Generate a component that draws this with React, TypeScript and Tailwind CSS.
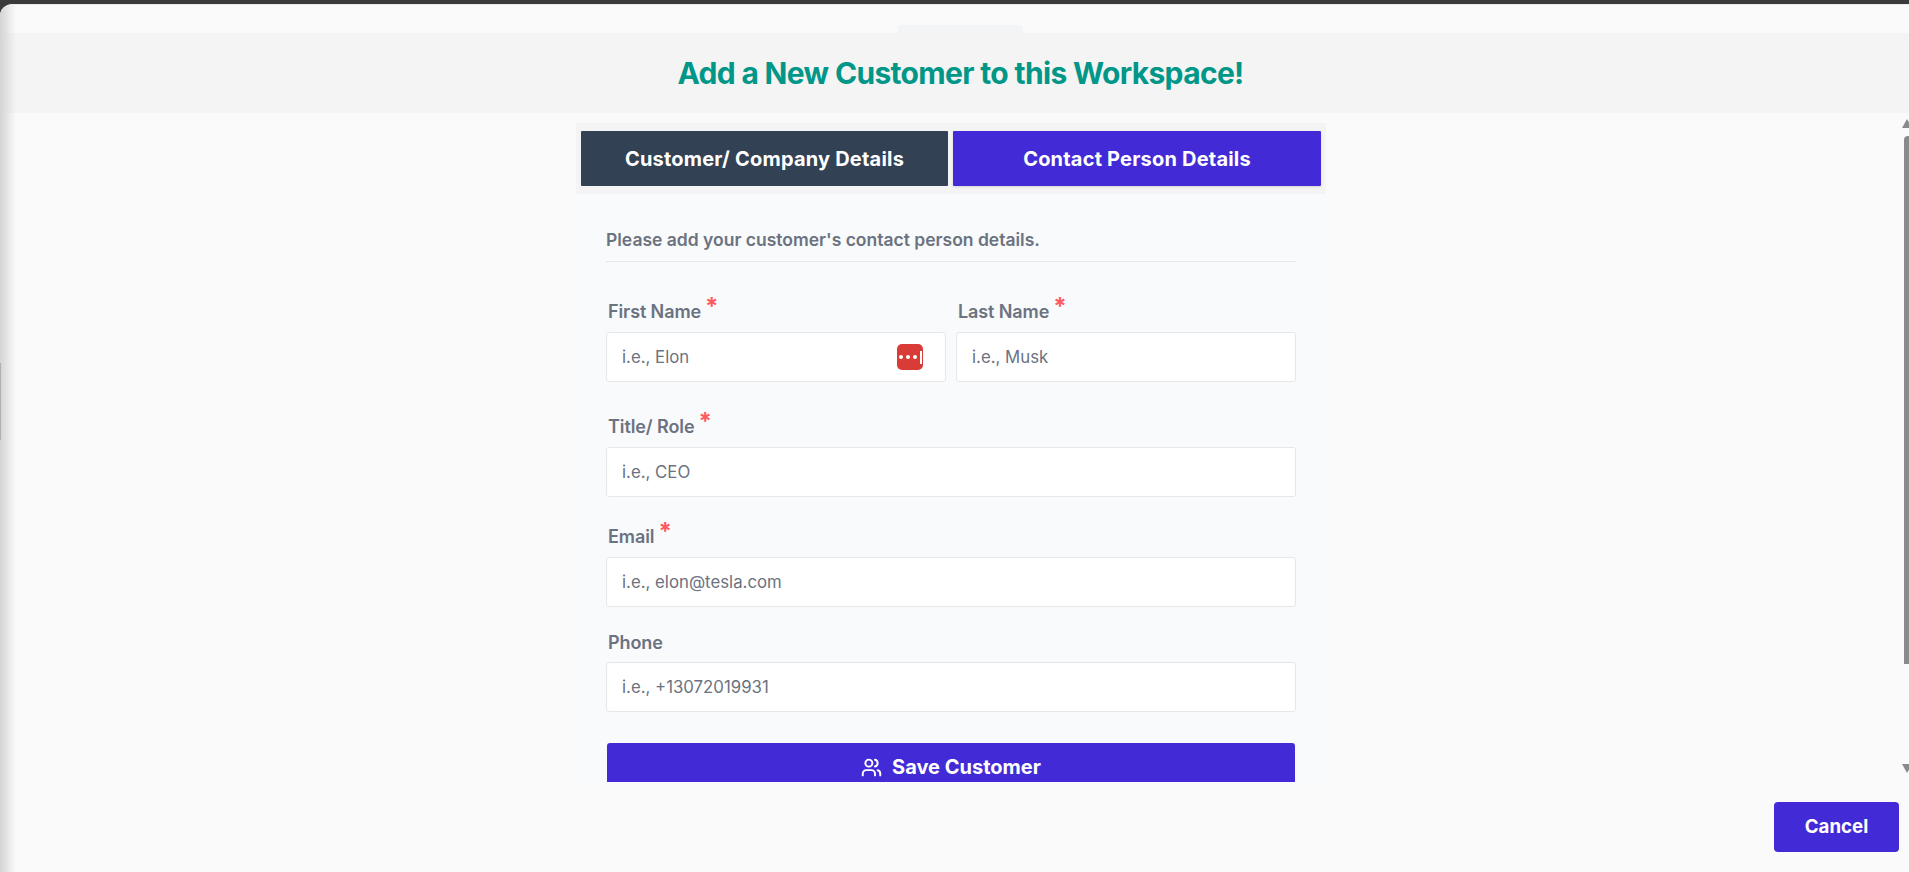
import React from "react";
import { Users } from "lucide-react";

const font = { fontFamily: '"Inter", "Liberation Sans", sans-serif' };

function Label({ text, required }: { text: string; required?: boolean }) {
  return (
    <div className="flex pl-[2px] text-[18px] leading-[24px] font-semibold tracking-[-0.1px] text-[#6b7280]">
      {text}
      {required && <span className="ml-[4px] -mt-[5px] text-[24px] leading-[24px] font-bold text-[#ff5a5f]">*</span>}
    </div>
  );
}

function Input({ placeholder }: { placeholder: string }) {
  return (
    <input
      placeholder={placeholder}
      className="block h-[50px] w-full rounded-[3px] border border-[#e5e7eb] bg-white px-[15px] text-[16.8px] text-[#6b7280] outline-none placeholder:text-[#6b7280]"
    />
  );
}

export default function App() {
  return (
    <div className="h-[872px] overflow-hidden bg-[#3a3a3a] pt-[4px]" style={font}>
      <div className="relative flex h-[868px] flex-col overflow-hidden rounded-tl-[12px] border-t border-[#e8eaf0] bg-[#fafafa]">
        {/* left edge shade */}
        <div className="absolute inset-y-0 left-0 w-[16px] bg-gradient-to-r from-[#d4d4d4] to-transparent" />
        <div className="absolute left-0 top-[358px] h-[77px] w-[1px] bg-[#b0b0b0]" />

        <div className="flex h-[28px] items-end justify-center pl-[12px]">
          <div className="h-[8px] w-[125px] rounded-t-[4px] bg-[#f3f4f6]" />
        </div>
        <div className="flex h-[80px] items-center justify-center bg-[#f4f4f4] pl-[12px]">
          <h1 className="text-[30px] font-bold leading-[36px] tracking-[-0.66px] text-[#009688]">
            Add a New Customer to this Workspace!
          </h1>
        </div>

        <div className="flex h-[669px]">
          <div className="mr-[2px] flex flex-1 flex-col items-center overflow-hidden pt-[10px]">
            <div className="flex w-[750px] gap-[5px] bg-[#f4f4f5] px-[5px] py-[8px]">
              <button className="h-[55px] w-[367px] rounded-[1px] bg-[#334155] text-[20px] font-bold tracking-[0.2px] text-white">
                Customer/ Company Details
              </button>
              <button className="h-[55px] w-[368px] rounded-[1px] bg-[#422bd6] text-[20px] font-bold tracking-[0.2px] text-white shadow-sm">
                Contact Person Details
              </button>
            </div>

            <div className="w-[750px] flex-1 bg-[#f9fafb] px-[30px] pt-[34px]">
              <div className="border-b border-[#e5e7eb] pb-[9px] text-[17.5px] leading-[24px] font-semibold text-[#6b7280]">
                Please add your customer's contact person details.
              </div>

              <div className="mt-[38px] grid grid-cols-2 gap-x-[10px]">
                <div>
                  <Label text="First Name" required />
                  <div className="relative mt-[8px]">
                    <Input placeholder="i.e., Elon" />
                    <div className="absolute right-[23px] top-[12px] flex h-[26px] w-[26px] items-center justify-center gap-[3px] rounded-[5px] bg-[#d93b36]">
                      <span className="h-[4px] w-[4px] rounded-full bg-white" />
                      <span className="h-[4px] w-[4px] rounded-full bg-white" />
                      <span className="h-[4px] w-[4px] rounded-full bg-white" />
                      <span className="h-[13px] w-[2px] bg-white" />
                    </div>
                  </div>
                </div>
                <div>
                  <Label text="Last Name" required />
                  <div className="mt-[8px]">
                    <Input placeholder="i.e., Musk" />
                  </div>
                </div>
              </div>

              <div className="mt-[33px]">
                <Label text="Title/ Role" required />
                <div className="mt-[8px]">
                  <Input placeholder="i.e., CEO" />
                </div>
              </div>

              <div className="mt-[28px]">
                <Label text="Email" required />
                <div className="mt-[8px]">
                  <Input placeholder="i.e., elon@tesla.com" />
                </div>
              </div>

              <div className="mt-[24px]">
                <Label text="Phone" />
                <div className="mt-[7px]">
                  <Input placeholder="i.e., +13072019931" />
                </div>
              </div>

              <div className="px-[1px]">
                <button className="mt-[31px] flex h-[48px] w-full items-center justify-center gap-[10px] rounded-[3px] bg-[#422bd6] text-[20px] font-bold text-white">
                  <Users size={21} strokeWidth={2.25} />
                  Save Customer
                </button>
              </div>
            </div>
          </div>

          {/* scrollbar */}
          <div className="flex w-[5px] flex-col items-center pt-[6px]">
            <div className="h-0 w-0 border-x-[5px] border-b-[9px] border-x-transparent border-b-[#8a8a8a]" />
            <div className="mt-[8px] h-[528px] w-[5px] rounded-tl-[4px] bg-[#8a8a8a]" />
            <div className="mt-auto mb-[9px] h-0 w-0 border-x-[5px] border-t-[9px] border-x-transparent border-t-[#8a8a8a]" />
          </div>
        </div>

        <div className="flex flex-1 items-start justify-end pr-[10px] pt-[20px]">
          <button className="h-[50px] w-[125px] rounded-[4px] bg-[#422bd6] text-[18.7px] font-bold text-white">
            Cancel
          </button>
        </div>
      </div>
    </div>
  );
}
